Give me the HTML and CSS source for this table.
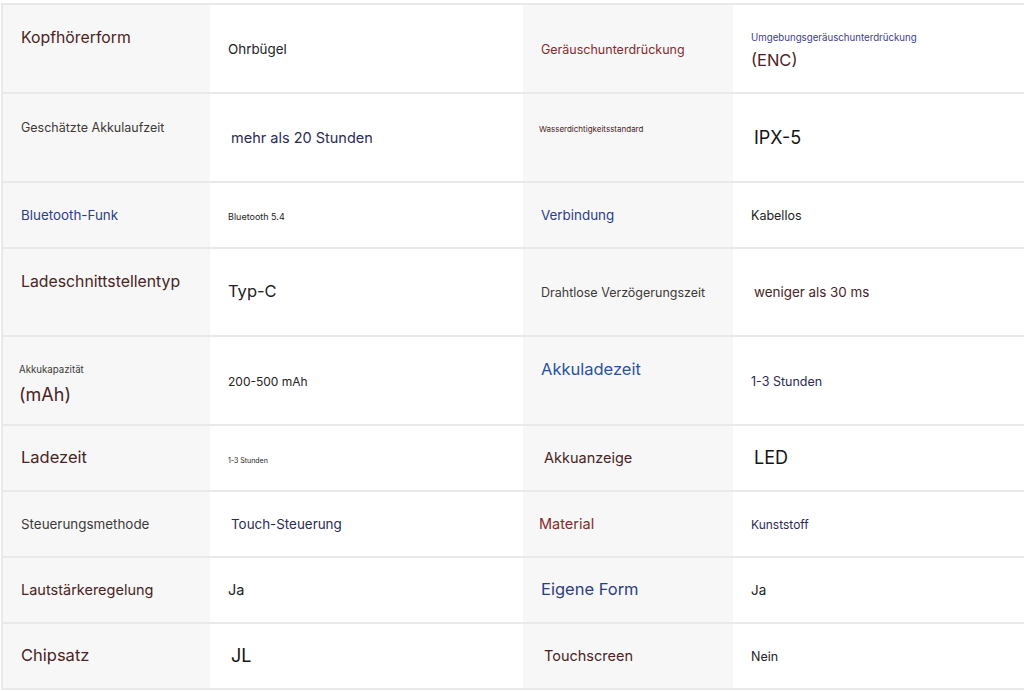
FILE: index.html
```html
<!DOCTYPE html>
<html lang="de">
<head>
    <meta charset="UTF-8">
    <meta name="viewport" content="width=device-width, initial-scale=1.0">
    <title>Technische Daten</title>
    <link rel="stylesheet" href="styles.css">
</head>
<body>
    <table class="spec-table">
        <colgroup>
            <col class="col-label">
            <col class="col-value">
            <col class="col-label2">
            <col class="col-value2">
        </colgroup>
        <tbody>
            <tr class="tall">
                <td class="label raise"><span class="t16 brown">Kopfhörerform</span></td>
                <td class="value"><span class="t14 ink">Ohrbügel</span></td>
                <td class="label"><span class="t13 red">Geräuschunterdrückung</span></td>
                <td class="value lower">
                    <span class="t10 violet block">Umgebungsgeräuschunterdrückung</span>
                    <span class="t17 brown block gap">(ENC)</span>
                </td>
            </tr>
            <tr class="tall">
                <td class="label raise"><span class="t13 grey">Geschätzte Akkulaufzeit</span></td>
                <td class="value ind"><span class="t15 navy">mehr als 20 Stunden</span></td>
                <td class="label raise out"><span class="t8 brown">Wasserdichtigkeitsstandard</span></td>
                <td class="value ind"><span class="t18 black">IPX-5</span></td>
            </tr>
            <tr class="short">
                <td class="label"><span class="t14 blue">Bluetooth-Funk</span></td>
                <td class="value"><span class="t9 ink">Bluetooth 5.4</span></td>
                <td class="label"><span class="t14 blue">Verbindung</span></td>
                <td class="value"><span class="t13 ink">Kabellos</span></td>
            </tr>
            <tr class="mid">
                <td class="label raise"><span class="t16 brown">Ladeschnittstellentyp</span></td>
                <td class="value"><span class="t17 ink">Typ-C</span></td>
                <td class="label"><span class="t13 grey">Drahtlose Verzögerungszeit</span></td>
                <td class="value ind"><span class="t14 brown">weniger als 30 ms</span></td>
            </tr>
            <tr class="tall">
                <td class="label out lower-lg">
                    <span class="t10 grey block">Akkukapazität</span>
                    <span class="t18 brown block gap-lg">(mAh)</span>
                </td>
                <td class="value"><span class="t12 ink">200-500 mAh</span></td>
                <td class="label raise"><span class="t17 sky">Akkuladezeit</span></td>
                <td class="value"><span class="t13 navy">1-3 Stunden</span></td>
            </tr>
            <tr class="short">
                <td class="label"><span class="t17 brown">Ladezeit</span></td>
                <td class="value"><span class="t7 ink">1-3 Stunden</span></td>
                <td class="label ind"><span class="t15 brown">Akkuanzeige</span></td>
                <td class="value ind"><span class="t18 black">LED</span></td>
            </tr>
            <tr class="short">
                <td class="label"><span class="t14 grey">Steuerungsmethode</span></td>
                <td class="value ind"><span class="t14 navy">Touch-Steuerung</span></td>
                <td class="label out"><span class="t15 red">Material</span></td>
                <td class="value"><span class="t12 navy">Kunststoff</span></td>
            </tr>
            <tr class="short">
                <td class="label"><span class="t15 brown">Lautstärkeregelung</span></td>
                <td class="value"><span class="t15 ink">Ja</span></td>
                <td class="label"><span class="t17 blue">Eigene Form</span></td>
                <td class="value"><span class="t14 ink">Ja</span></td>
            </tr>
            <tr class="short">
                <td class="label"><span class="t17 brown">Chipsatz</span></td>
                <td class="value ind"><span class="t18 black">JL</span></td>
                <td class="label ind"><span class="t15 brown">Touchscreen</span></td>
                <td class="value"><span class="t13 ink">Nein</span></td>
            </tr>
        </tbody>
    </table>
</body>
</html>
```

FILE: styles.css
```css
body {
    margin: 0;
    padding: 3px 0 0 1px;
    background: #fff;
    font-family: Inter, Roboto, sans-serif;
    color: #222;
    overflow: hidden;
}
.spec-table {
    width: 1040px;
    table-layout: fixed;
    border-collapse: separate;
    border-spacing: 0;
    border-top: 2px solid #e9e9e9;
    border-left: 2px solid #e9e9e9;
}
.col-label { width: 207px; }
.col-value { width: 313px; }
.col-label2 { width: 210px; }
.tall { height: 89px; }
.mid { height: 88px; }
.short { height: 66px; }
td {
    border-bottom: 2px solid #e9e9e9;
    padding: 0 0 0 18px;
    vertical-align: middle;
    white-space: nowrap;
    line-height: 1.2;
}
.label {
    background: #f7f7f7;
}
.value {
    background: #fff;
}
.raise {
    padding-bottom: 21px;
}
.lower {
    padding-top: 6px;
}
.lower-lg {
    padding-top: 8px;
}
.ind {
    padding-left: 21px;
}
.out {
    padding-left: 16px;
}
.block {
    display: block;
}
.gap {
    margin-top: 7px;
}
.gap-lg {
    margin-top: 8px;
}

/* text sizes */
.t7 { font-size: 7px; }
.t8 { font-size: 8px; }
.t9 { font-size: 9px; }
.t10 { font-size: 9.7px; }
.t12 { font-size: 12px; }
.t13 { font-size: 12.5px; }
.t14 { font-size: 13.4px; }
.t15 { font-size: 14.5px; }
.t16 { font-size: 15.8px; }
.t17 { font-size: 16.5px; }
.t18 { font-size: 18px; }

/* text colours */
.brown { color: #4a2424; }
.red { color: #842c2c; }
.grey { color: #3d3a38; }
.ink { color: #222; }
.black { color: #141414; }
.navy { color: #2b2b52; }
.blue { color: #2c3d86; }
.sky { color: #2a52a2; }
.violet { color: #3d3c8e; }
```
